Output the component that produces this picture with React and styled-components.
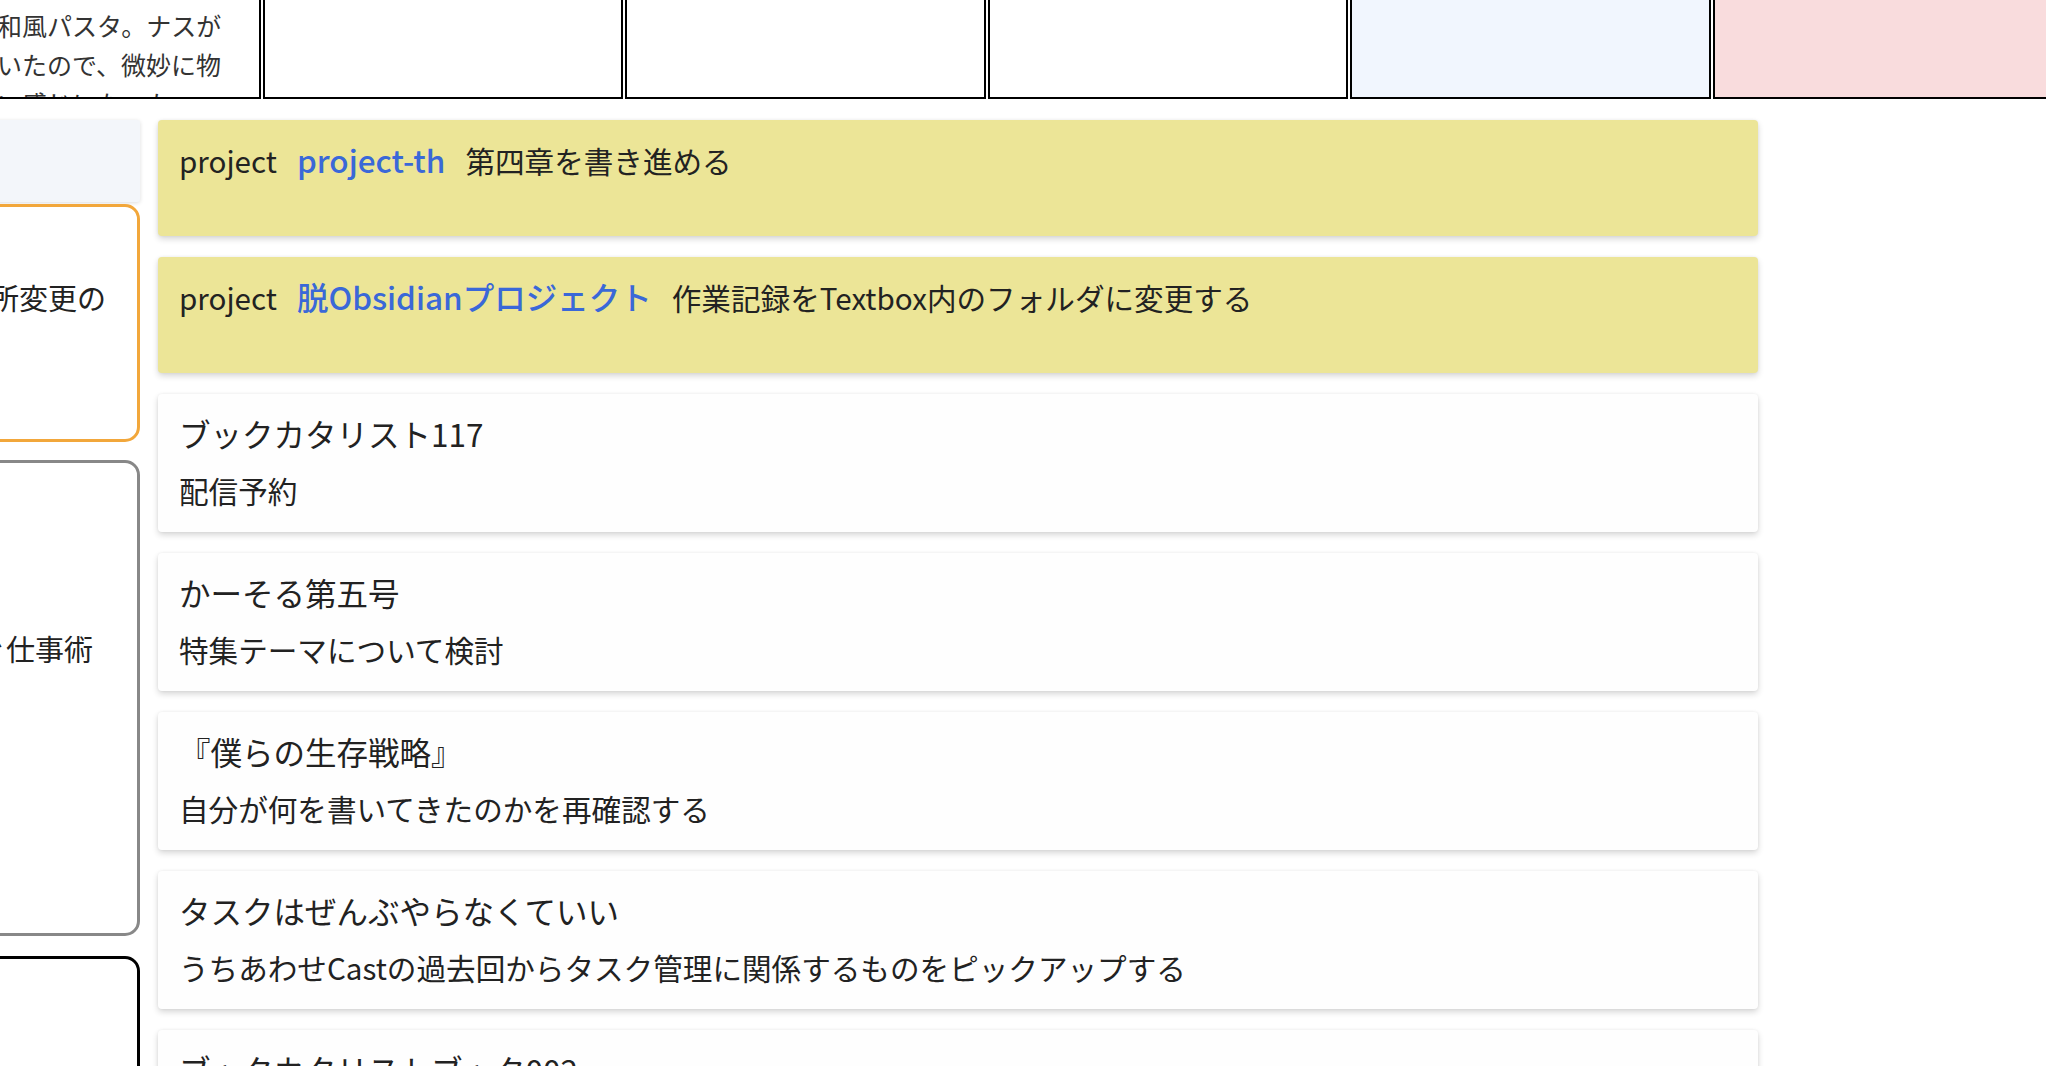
import React from "react";
import styled, { createGlobalStyle } from "styled-components";

const GlobalStyle = createGlobalStyle`
  body {
    margin: 0;
    overflow: hidden;
    background: #fff;
    font-family: "Noto Sans CJK JP", "Noto Sans", sans-serif;
    color: #222;
  }
`;

const days = [
  {
    id: 0,
    bg: "#fff",
    note: "お昼は、茄子とベーコンの簡単な和風パスタ。ナスが萎びていたので、微妙に物足りない感じになった。",
  },
  { id: 1, bg: "#fff", note: "" },
  { id: 2, bg: "#fff", note: "" },
  { id: 3, bg: "#fff", note: "" },
  { id: 4, bg: "#f1f6fe", note: "" },
  { id: 5, bg: "#f9dcdd", note: "" },
];

const projects = [
  { id: 1, label: "project", link: "project-th", text: "第四章を書き進める" },
  { id: 2, label: "project", link: "脱Obsidianプロジェクト", text: "作業記録をTextbox内のフォルダに変更する" },
];

const tasks = [
  { id: 1, title: "ブックカタリスト117", note: "配信予約" },
  { id: 2, title: "かーそる第五号", note: "特集テーマについて検討" },
  { id: 3, title: "『僕らの生存戦略』", note: "自分が何を書いてきたのかを再確認する" },
  { id: 4, title: "タスクはぜんぶやらなくていい", note: "うちあわせCastの過去回からタスク管理に関係するものをピックアップする" },
  { id: 5, title: "ブックカタリストブック002", note: "目次案を作る" },
];

const App = () => {
  return (
    <>
      <GlobalStyle />
      <Page>
        <WeekRow>
          {days.map((day) => (
            <DayCell key={day.id} $bg={day.bg}>
              {day.note}
            </DayCell>
          ))}
        </WeekRow>

        <Board>
          <Sidebar>
            <SideHeader />
            <SideBox $color="#f2a73b" $height={238} $space={1.5} $indent={29} $lift={10}>
              事務所変更の<br />連絡
            </SideBox>
            <SideBox $color="#888" $height={476} $space={18} $indent={16} $lift={16}>
              超稼ぐ仕事術<br />読書<br />メモ
            </SideBox>
            <SideBox $color="#000" $height={300} $space={20} $indent={29} $lift={0} />
          </Sidebar>

          <TaskList>
            {projects.map((p) => (
              <ProjectCard key={p.id}>
                <ProjectRow>
                  <span>{p.label}</span>
                  <ProjectLink href="#">{p.link}</ProjectLink>
                  <span>{p.text}</span>
                </ProjectRow>
              </ProjectCard>
            ))}
            {tasks.map((t) => (
              <TaskCard key={t.id}>
                <TaskTitle>{t.title}</TaskTitle>
                <TaskNote>{t.note}</TaskNote>
              </TaskCard>
            ))}
          </TaskList>
        </Board>
      </Page>
    </>
  );
};

const Page = styled.div`
  margin: -35.5px 0 0 -100px;
  width: 2300px;
`;

const WeekRow = styled.div`
  display: flex;
  gap: 2px;
`;

const DayCell = styled.div`
  box-sizing: border-box;
  flex: 0 0 360.5px;
  height: 134.5px;
  border: 2px solid #000;
  background: ${(p) => p.$bg};
  padding: 0 20px;
  overflow: hidden;
  font-size: 25px;
  line-height: 39px;
  color: #333;
`;

const Board = styled.div`
  display: flex;
  align-items: flex-start;
  gap: 18px;
  margin-top: 21px;
`;

const Sidebar = styled.div`
  width: 240px;
  display: flex;
  flex-direction: column;
`;

const SideHeader = styled.div`
  height: 82px;
  background: #f3f6fa;
  border-radius: 0 3px 3px 0;
  box-shadow: 0 1px 4px rgba(0, 0, 0, 0.14);
`;

const SideBox = styled.div`
  box-sizing: border-box;
  height: ${(p) => p.$height}px;
  margin-top: ${(p) => p.$space}px;
  border: 3px solid ${(p) => p.$color};
  border-radius: 15px;
  background: #fff;
  padding: 0 29px ${(p) => p.$lift}px ${(p) => p.$indent}px;
  display: flex;
  flex-direction: column;
  justify-content: center;
  font-size: 29px;
  line-height: 42px;
  color: #222;
`;

const TaskList = styled.div`
  width: 1600px;
  display: flex;
  flex-direction: column;
  gap: 21px;
`;

const ProjectCard = styled.div`
  box-sizing: border-box;
  height: 116px;
  padding: 16px 21px;
  background: #ece597;
  border-radius: 4px;
  box-shadow: 0 3px 6px rgba(0, 0, 0, 0.16), 0 0 3px rgba(0, 0, 0, 0.06);
`;

const ProjectRow = styled.div`
  display: flex;
  align-items: baseline;
  gap: 20px;
  height: 46px;
  line-height: 46px;
  font-size: 29.6px;
`;

const ProjectLink = styled.a`
  color: #3a68d8;
  font-size: 31.5px;
  font-weight: 500;
  text-decoration: none;
`;

const TaskCard = styled.div`
  box-sizing: border-box;
  height: 138px;
  padding: 16px 21px 19px;
  background: #fefefe;
  border-radius: 4px;
  box-shadow: 0 3px 6px rgba(0, 0, 0, 0.16), 0 0 3px rgba(0, 0, 0, 0.06);
`;

const TaskTitle = styled.div`
  font-size: 31.5px;
  line-height: 46px;
  white-space: nowrap;
`;

const TaskNote = styled.div`
  margin-top: 13px;
  font-size: 29.6px;
  line-height: 44px;
  white-space: nowrap;
`;

export default App;
